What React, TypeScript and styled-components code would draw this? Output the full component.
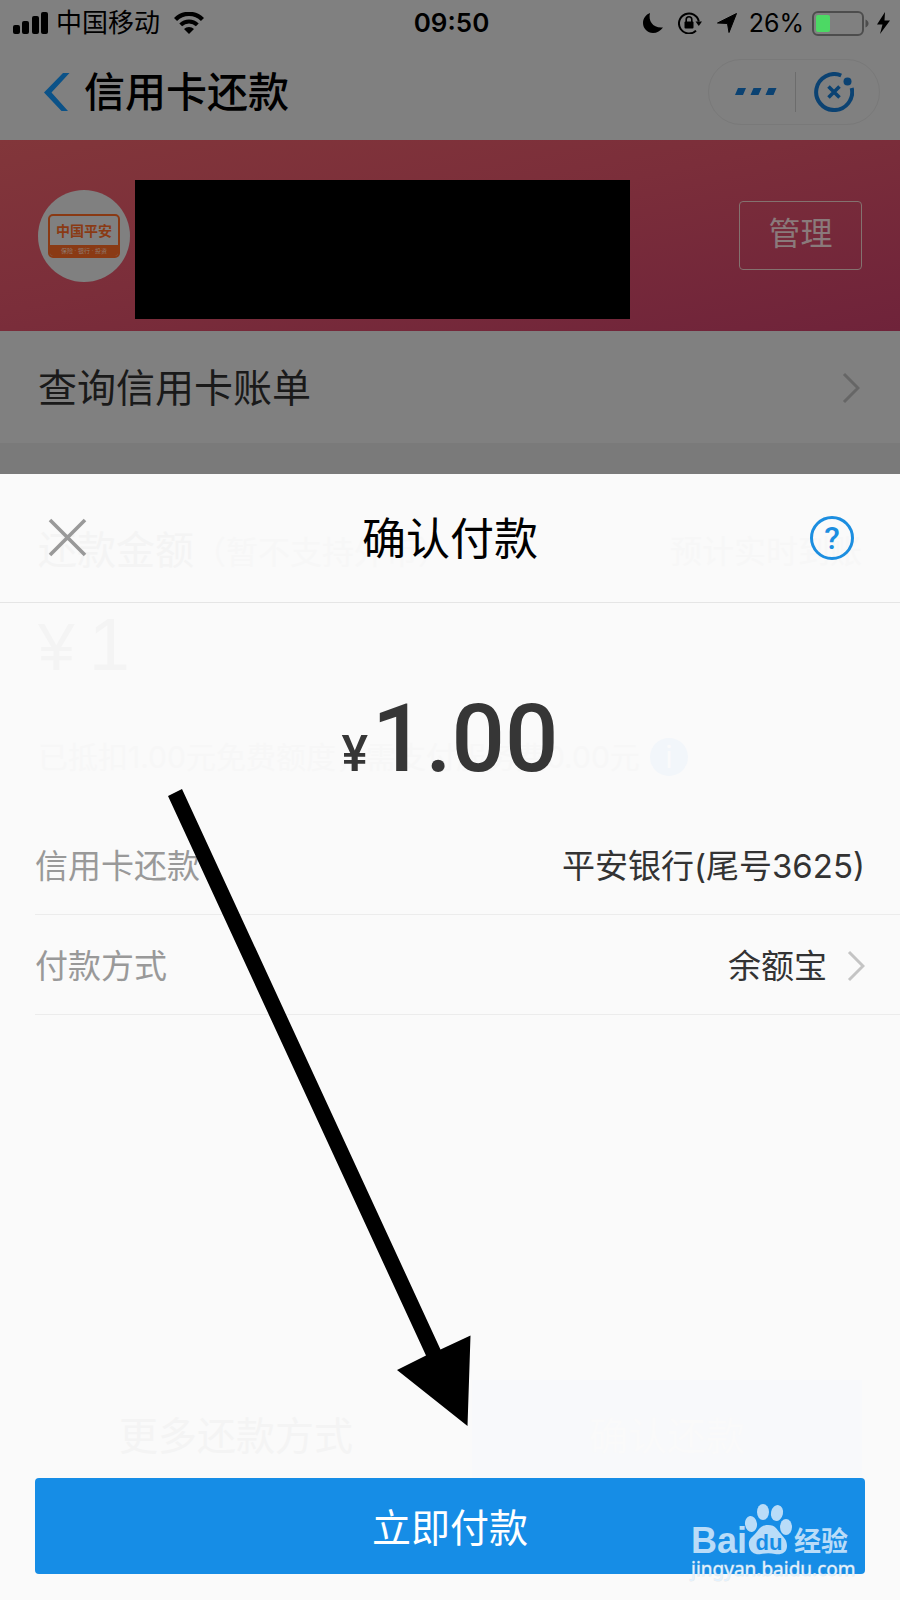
import React from 'react';
import styled, { createGlobalStyle } from 'styled-components';

const Global = createGlobalStyle`
  * { box-sizing: border-box; }
  body { margin: 0; background: #fafafa; font-family: Inter, "Noto Sans CJK SC", sans-serif; }
  button { font-family: inherit; padding: 0; border: 0; background: none; cursor: pointer; }
  h1, h2, p, dl, dt, dd { margin: 0; font-weight: 400; }
  svg { display: block; flex: none; }
`;

const Page = styled.div`
  position: relative;
  display: flex;
  flex-direction: column;
  min-height: 100vh;
  overflow: hidden;
`;

const Dimmed = styled.div`
  background: #808080;
  color: #000;
`;

const StatusBar = styled.header`
  display: grid;
  grid-template-columns: 1fr auto 1fr;
  align-items: center;
  height: 44px;
  padding: 2px 10px 0 13px;
  font-size: 26px;
  line-height: 40px;
`;

const StatusGroup = styled.div<{ $end?: boolean }>`
  display: flex;
  align-items: center;
  gap: ${(p) => (p.$end ? 8 : 14)}px;
  justify-content: ${(p) => (p.$end ? 'flex-end' : 'flex-start')};
`;

const Carrier = styled.span`
  display: flex;
  align-items: center;
  gap: 8px;
`;

const StatusIcons = styled.span`
  display: flex;
  align-items: center;
  gap: 15px;
  margin-right: 4px;
`;

const Percent = styled.span`
  font-size: 25px;
`;

const Clock = styled.time`
  font-weight: 600;
  font-size: 26px;
`;

const NavBar = styled.nav`
  display: flex;
  align-items: center;
  height: 96px;
  padding: 0 20px 0 43px;
`;

const NavTitle = styled.h1`
  flex: 1;
  padding-left: 14px;
  font-size: 41px;
  line-height: 60px;
  font-weight: 500;
`;

const Capsule = styled.div`
  display: flex;
  align-items: center;
  width: 172px;
  height: 66px;
  border: 1px solid #797979;
  border-radius: 33px;
`;

const CapsuleButton = styled.button`
  flex: 1;
  display: flex;
  justify-content: center;
  align-items: center;
  height: 40px;
  padding-left: 8px;
  & + & {
    padding: 0 6px 0 0;
    border-left: 1px solid #6c6c6c;
  }
`;

const Banner = styled.section`
  display: flex;
  align-items: center;
  height: 191px;
  padding: 0 38px;
  background: linear-gradient(168deg, #82363a 0%, #7b2e3a 45%, #6f233a 100%);
`;

const BankLogo = styled.div`
  display: flex;
  align-items: center;
  justify-content: center;
  width: 92px;
  height: 92px;
  border-radius: 50%;
  background: #808080;
`;

const BankPlate = styled.div`
  display: flex;
  flex-direction: column;
  width: 72px;
  height: 44px;
  border: 2px solid #8a3a14;
  border-radius: 5px;
  text-align: center;
  overflow: hidden;
`;

const BankName = styled.strong`
  flex: 1;
  color: #8a3a14;
  font-size: 14px;
  line-height: 29px;
`;

const BankTags = styled.small`
  background: #8a3a14;
  color: #8f7a70;
  font-size: 6px;
  line-height: 12px;
`;

const Redaction = styled.div`
  flex: 0 1 495px;
  align-self: flex-start;
  height: 139px;
  margin: 40px auto 0 5px;
  background: #000;
`;

const ManageButton = styled.button`
  width: 123px;
  height: 69px;
  padding-bottom: 4px;
  border: 1px solid #84726f;
  border-radius: 4px;
  color: #8a7a7b;
  font-size: 32px;
  line-height: 48px;
`;

const BillLink = styled.a`
  display: flex;
  align-items: center;
  justify-content: space-between;
  height: 112px;
  padding: 2px 40px 0 38px;
  color: #1a1a1a;
  font-size: 39px;
  line-height: 56px;
  text-decoration: none;
`;

const Spacer = styled.div`
  height: 31px;
  background: #7a7a7a;
`;

const Stack = styled.main`
  flex: 1;
  display: grid;
  background: #fafafa;
  & > * { grid-area: 1 / 1; min-width: 0; }
`;

const Backdrop = styled.section`
  display: flex;
  flex-direction: column;
  padding: 48px 38px 108px;
  color: #f4f4f4;
  user-select: none;
`;

const GhostHead = styled.div`
  display: flex;
  align-items: center;
  justify-content: space-between;
  font-size: 32px;
  line-height: 56px;
  color: #f7f7f7;
`;

const GhostTitle = styled.span`
  font-size: 39px;
  color: #f4f4f4;
`;

const GhostAmount = styled.p`
  display: flex;
  align-items: baseline;
  gap: 14px;
  padding-top: 22px;
  font-family: "Liberation Sans", sans-serif;
  font-size: 74px;
  line-height: 84px;
  & > span:first-child { font-size: 66px; }
`;

const GhostNote = styled.p`
  display: flex;
  align-items: center;
  gap: 10px;
  padding-top: 46px;
  font-size: 30px;
  line-height: 44px;
  color: #f7f7f7;
`;

const GhostInfo = styled.span`
  display: flex;
  align-items: center;
  justify-content: center;
  width: 38px;
  height: 38px;
  border-radius: 50%;
  background: #f2f6fa;
  color: #fafafa;
`;

const GhostActions = styled.div`
  display: grid;
  grid-template-columns: 1fr 390px;
  margin-top: auto;
  text-align: center;
  font-size: 39px;
  line-height: 112px;
  & > :first-child { padding-right: 38px; }
  & > :last-child { background: #f8f9fb; color: #fafafa; }
`;

const Sheet = styled.section`
  display: flex;
  flex-direction: column;
  z-index: 1;
`;

const SheetHeader = styled.div`
  display: grid;
  grid-template-columns: 1fr auto 1fr;
  align-items: center;
  height: 129px;
  padding: 0 46px;
  border-bottom: 1px solid #e5e5e5;
  & > :last-child { justify-self: end; }
`;

const SheetTitle = styled.h2`
  padding-top: 2px;
  font-size: 44px;
  line-height: 64px;
  color: #000;
`;

const CloseButton = styled.button`
  justify-self: start;
`;

const HelpButton = styled.button`
  width: 44px;
  height: 44px;
  border: 3px solid #1c8ee0;
  border-radius: 50%;
  color: #1c8ee0;
  font-family: Roboto, sans-serif;
  font-weight: 500;
  font-size: 32px;
  line-height: 38px;
`;

const Amount = styled.p`
  display: flex;
  align-items: baseline;
  justify-content: center;
  gap: 4px;
  height: 212px;
  padding-top: 80px;
  color: #363636;
  font-family: Roboto, sans-serif;
  font-weight: 500;
  font-size: 94px;
  line-height: 112px;
`;

const Currency = styled.span`
  font-size: 50px;
  line-height: 56px;
`;

const Details = styled.dl`
  padding-left: 35px;
`;

const DetailRow = styled.div`
  display: flex;
  align-items: center;
  justify-content: space-between;
  height: 100px;
  padding: 2px 35px 0 0;
  border-bottom: 1px solid #ececec;
  font-size: 33px;
  line-height: 48px;
`;

const Label = styled.dt`
  color: #999;
`;

const Value = styled.dd`
  display: flex;
  align-items: center;
  gap: 20px;
  color: #333;
`;

const PayButton = styled.button`
  height: 96px;
  margin: auto 35px 26px;
  padding-top: 4px;
  border-radius: 4px;
  background: #168de6;
  color: #fff;
  font-size: 39px;
  line-height: 56px;
`;

const Pointer = styled.svg`
  position: absolute;
  z-index: 2;
  top: 788px;
  left: 166px;
  pointer-events: none;
`;

const Watermark = styled.svg`
  position: absolute;
  z-index: 2;
  right: 40px;
  bottom: 14px;
  pointer-events: none;
`;

const Chevron = ({ color }: { color: string }) => (
  <svg width="18" height="32" viewBox="0 0 18 32" fill="none" stroke={color} strokeWidth="3">
    <path d="M2 2l14 14L2 30" />
  </svg>
);

const Signal = () => (
  <svg width="35" height="22" viewBox="0 0 35 22">
    <rect x="0" y="13" width="7" height="9" rx="2" />
    <rect x="9" y="9" width="7" height="13" rx="2" />
    <rect x="19" y="4" width="7" height="18" rx="2" />
    <rect x="28" y="0" width="7" height="22" rx="2" />
  </svg>
);

const Wifi = () => (
  <svg width="30" height="22" viewBox="0 0 30 22" fill="none" stroke="#000">
    <path d="M1.5 7.5a19 19 0 0 1 27 0" strokeWidth="4.4" />
    <path d="M6.7 12.8a11.8 11.8 0 0 1 16.6 0" strokeWidth="4" />
    <path d="M10 17a7 7 0 0 1 10 0l-5 5z" fill="#000" stroke="none" />
  </svg>
);

const Moon = () => (
  <svg width="20" height="20" viewBox="0 0 20 20">
    <path d="M7 0C5 8 10 15.5 20 14.5C17.5 18 14 20 10 20C4.5 20 0 15.5 0 10C0 5.5 2.8 1.500 7 0z" />
  </svg>
);

const RotationLock = () => (
  <svg width="24" height="22" viewBox="0 0 24 22" fill="none" stroke="#000" strokeWidth="2">
    <path d="M18 18.600A10 10 0 1 1 20.800 9.500" />
    <path d="M17.500 9.500H24L20.800 14z" fill="#000" stroke="none" />
    <rect x="6.500" y="9.500" width="9" height="7" rx="1" fill="#000" stroke="none" />
    <path d="M8.200 10V7.500a2.800 2.800 0 0 1 5.600 0V10" strokeWidth="1.600" />
  </svg>
);

const Location = () => (
  <svg width="20" height="20" viewBox="0 0 20 20">
    <path d="M19.5 0.5L12 19.5L10.500 10.500L0.500 10z" stroke="#000" strokeLinejoin="round" />
  </svg>
);

const Battery = () => (
  <svg width="57" height="25" viewBox="0 0 57 25">
    <rect x="1" y="1" width="50" height="23" rx="5" fill="none" stroke="#4d4d4d" strokeWidth="2" />
    <rect x="4" y="4" width="14" height="17" rx="2" fill="#4cd964" />
    <path d="M53.5 8.5c4 1.500 4 6.500 0 8z" fill="#4d4d4d" />
  </svg>
);

const Bolt = () => (
  <svg width="13" height="22" viewBox="0 0 13 22">
    <path d="M8 0L0 12.500h5.500L3 22l10-13.500H7.500z" />
  </svg>
);

export default function App() {
  return (
    <>
      <Global />
      <Page>
        <Dimmed>
          <StatusBar>
            <StatusGroup>
              <Carrier><Signal />中国移动</Carrier>
              <Wifi />
            </StatusGroup>
            <Clock>09:50</Clock>
            <StatusGroup $end>
              <StatusIcons><Moon /><RotationLock /><Location /></StatusIcons>
              <Percent>26%</Percent>
              <Battery />
              <Bolt />
            </StatusGroup>
          </StatusBar>

          <NavBar>
            <button type="button" aria-label="返回">
              <svg width="27" height="38" viewBox="0 0 27 38">
                <path d="M20 0h6.500L8.500 19.500L25 38h-6.500L1 19.500z" fill="#0b5288" />
              </svg>
            </button>
            <NavTitle>信用卡还款</NavTitle>
            <Capsule>
              <CapsuleButton type="button" aria-label="更多">
                <svg width="42" height="8" viewBox="0 0 42 8" fill="#0b4272">
                  <path d="M3 0h8l-3 7H0zM18.500 0h8l-3 7h-8zM33.500 0h8l-3 7h-8z" />
                </svg>
              </CapsuleButton>
              <CapsuleButton type="button" aria-label="关闭">
                <svg width="40" height="40" viewBox="0 0 40 40" fill="none" stroke="#0b4272" strokeWidth="4">
                  <path d="M27.200 3.500A18 18 0 1 0 37.700 16" />
                  <path d="M14.500 14.500l11 11M25.500 14.500l-11 11" strokeWidth="3.600" />
                  <circle cx="33.500" cy="9.500" r="4" fill="#0b4272" stroke="none" />
                </svg>
              </CapsuleButton>
            </Capsule>
          </NavBar>

          <Banner>
            <BankLogo>
              <BankPlate>
                <BankName>中国平安</BankName>
                <BankTags>保险 · 银行 · 投资</BankTags>
              </BankPlate>
            </BankLogo>
            <Redaction />
            <ManageButton type="button">管理</ManageButton>
          </Banner>

          <BillLink href="#bill">
            查询信用卡账单
            <Chevron color="#666" />
          </BillLink>
          <Spacer />
        </Dimmed>

        <Stack>
          <Backdrop aria-hidden="true">
            <GhostHead>
              <span><GhostTitle>还款金额</GhostTitle>（暂不支持外币）</span>
              <span>预计实时到账</span>
            </GhostHead>
            <GhostAmount><span>¥</span><span>1</span></GhostAmount>
            <GhostNote>
              已抵扣1.00元免费额度，需支付服务费0.00元
              <GhostInfo>i</GhostInfo>
            </GhostNote>
            <GhostActions>
              <span>更多还款方式</span>
              <span>确认还款</span>
            </GhostActions>
          </Backdrop>

          <Sheet role="dialog" aria-labelledby="sheet-title">
            <SheetHeader>
              <CloseButton type="button" aria-label="关闭">
                <svg width="42" height="42" viewBox="0 0 42 42" stroke="#999" strokeWidth="3.600">
                  <path d="M4 3l35 35M39 3L4 38" />
                </svg>
              </CloseButton>
              <SheetTitle id="sheet-title">确认付款</SheetTitle>
              <HelpButton type="button" aria-label="帮助">?</HelpButton>
            </SheetHeader>
            <Amount><Currency>¥</Currency>1.00</Amount>
            <Details>
              <DetailRow>
                <Label>信用卡还款</Label>
                <Value>平安银行(尾号3625)</Value>
              </DetailRow>
              <DetailRow>
                <Label>付款方式</Label>
                <Value>余额宝<Chevron color="#c4c4c4" /></Value>
              </DetailRow>
            </Details>
            <PayButton type="button">立即付款</PayButton>
          </Sheet>
        </Stack>

        <Pointer width="306" height="640" viewBox="0 0 306 640" aria-hidden="true">
          <path d="M2 8L16 1L274.500 561.500L304.500 547.500L301.500 638L231 582L260 567.500z" />
        </Pointer>

        <Watermark width="172" height="84" viewBox="0 0 172 84" aria-hidden="true">
          <g fill="#b9dcf8">
            <text x="3" y="51" fontFamily="Liberation Sans, sans-serif" fontWeight="700" fontSize="36">Bai</text>
            <ellipse cx="63" cy="22" rx="6" ry="8" transform="rotate(-8 63 22)" />
            <ellipse cx="75" cy="10" rx="6" ry="8" />
            <ellipse cx="89" cy="11" rx="6" ry="8" transform="rotate(12 89 11)" />
            <ellipse cx="98" cy="25" rx="6" ry="8" />
            <path d="M80 23c-8 0-9 5-13 9c-4 4-7 6-6 12c1 7 7 9 12 8c5-1 10-1 14 0c6 1 12-1 12-8c0-6-3-8-6-12c-4-4-5-9-13-9z" />
            <text x="106" y="49" fontFamily="Noto Sans CJK SC, sans-serif" fontWeight="700" fontSize="27">经验</text>
          </g>
          <text x="81" y="48" textAnchor="middle" fill="#168de6" fontFamily="Liberation Sans, sans-serif" fontWeight="700" fontSize="22">du</text>
          <text x="3" y="74" fill="#e3f2fe" stroke="#dcdcdc" strokeWidth="1" paintOrder="stroke" strokeOpacity="0.5" fontFamily="Noto Sans, sans-serif" fontSize="19">jingyan.baidu.com</text>
        </Watermark>
      </Page>
    </>
  );
}
